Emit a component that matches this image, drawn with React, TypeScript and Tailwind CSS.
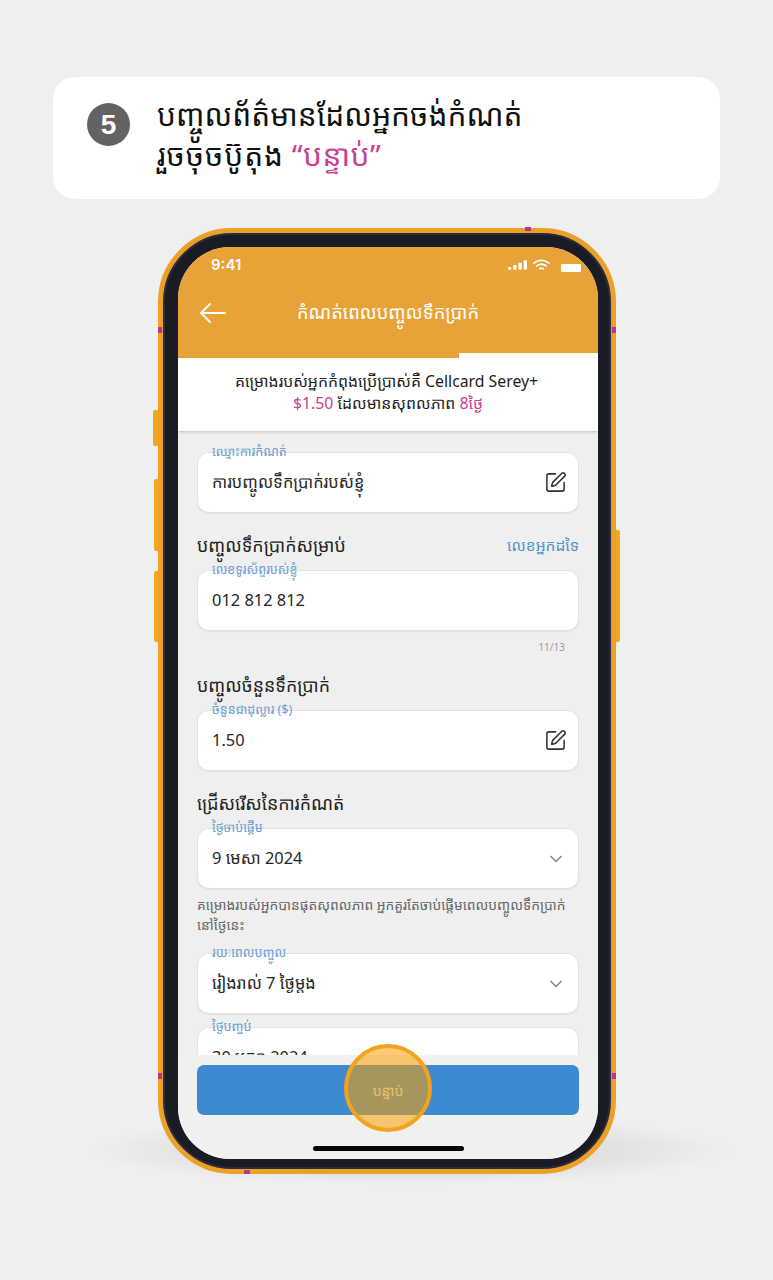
import { ChevronDown, SquarePen } from 'lucide-react';

const khmer = "font-['Noto_Sans','Noto_Sans_Khmer','Khmer_OS','Liberation_Sans',sans-serif]";

function Field({ label, value, icon, className = '' }: { label: string; value: string; icon?: 'edit' | 'chevron'; className?: string }) {
    return (
        <div className={`relative flex h-[61px] shrink-0 items-center justify-between rounded-[12px] border border-[#e2e2e2] bg-white pl-[14px] pr-[11px] shadow-[0_1px_1px_rgba(0,0,0,0.05)] ${className}`}>
            <span className="absolute left-[8px] top-[-10px] bg-[linear-gradient(to_bottom,transparent_56%,white_56%)] px-[6px] text-[12.6px] leading-[18px] text-[#6aa0d4]">{label}</span>
            <span className="mb-[2px] text-[16.4px] leading-[24px] text-[#262626]">{value}</span>
            {icon === 'edit' && <SquarePen size={23} strokeWidth={1.6} className="text-[#333]" />}
            {icon === 'chevron' && <ChevronDown size={20} strokeWidth={2} className="mr-[1px] text-[#8a8a8a]" />}
        </div>
    );
}

function Heading({ children }: { children: string }) {
    return <h2 className="text-[17.8px] font-normal leading-[26px] text-[#222]">{children}</h2>;
}

function StatusIcons() {
    return (
        <div className="flex items-center gap-[6px]">
            <svg width="19" height="10" viewBox="0 0 20 10" fill="white">
                <rect x="0" y="7" width="3.5" height="3" rx="1" />
                <rect x="5.5" y="5" width="3.5" height="5" rx="1" />
                <rect x="11" y="2.5" width="3.5" height="7.5" rx="1" />
                <rect x="16.5" y="0" width="3.5" height="10" rx="1" />
            </svg>
            <svg width="17" height="12" viewBox="0 0 18 12" fill="none" stroke="white" strokeWidth="1.7" strokeLinecap="round">
                <path d="M1 4 Q9 -2 17 4" />
                <path d="M4 7 Q9 3 14 7" />
                <path d="M7 10 Q9 8.6 11 10" />
            </svg>
            <div className="ml-[5px] mt-[6px] h-[8px] w-[20px] rounded-[1px] bg-white" />
        </div>
    );
}

const ticks = [
    'left-[525px] top-[227px] h-[4px] w-[6px]',
    'left-[158px] top-[327px] h-[6px] w-[4px]',
    'left-[612px] top-[327px] h-[6px] w-[4px]',
    'left-[158px] top-[1073px] h-[6px] w-[4px]',
    'left-[612px] top-[1073px] h-[6px] w-[4px]',
    'left-[244px] top-[1170px] h-[4px] w-[6px]',
];

const sideButtons = [
    'left-[153px] top-[410px] h-[36px] w-[5px] rounded-l-[2px]',
    'left-[154px] top-[479px] h-[72px] w-[4px] rounded-l-[2px]',
    'left-[154px] top-[571px] h-[71px] w-[4px] rounded-l-[2px]',
    'left-[616px] top-[530px] h-[112px] w-[4px] rounded-r-[2px]',
];

export default function App() {
    return (
        <div className={`relative flex h-[1280px] w-[773px] flex-col overflow-hidden bg-[#efefef] ${khmer}`}>
            {/* Floor shadow */}
            <div className="absolute left-[90px] top-[1115px] h-[70px] w-[640px] rounded-[50%] bg-[radial-gradient(ellipse_closest-side,#d2d2d2_0%,#dedede_55%,#efefef00_100%)]" />

            {/* Step card */}
            <div className="relative mx-[53px] mt-[77px] flex h-[122px] items-start rounded-[22px] bg-white pl-[34px] pt-[18px]">
                <div className="mt-[8px] flex h-[43px] w-[43px] shrink-0 items-center justify-center rounded-full bg-[#636363] font-['Liberation_Sans',sans-serif] text-[28px] font-bold text-white">5</div>
                <p className="ml-[27px] text-[29.9px] leading-[40px] text-[#111]">
                    បញ្ចូលព័ត៌មានដែលអ្នកចង់កំណត់
                    <br />
                    <span className="tracking-[0.9px]">រួចចុចប៊ូតុង</span> <span className="tracking-[0.45px] text-[#c9408f]">“បន្ទាប់”</span>
                </p>
            </div>

            {/* Phone side buttons */}
            {sideButtons.map((c) => (
                <div key={c} className={`absolute bg-[#f2a81e] ${c}`} />
            ))}

            {/* Phone */}
            <div className="relative ml-[158px] mt-[29px] h-[946px] w-[458px] rounded-[74px] border-[5px] border-[#e9a227] bg-[#1a1c25] pb-[10px] pl-[15px] pr-[13px] pt-[14px] shadow-[inset_0_0_0_2px_#2c2a3e]">
                <div className="relative flex h-full flex-col overflow-hidden rounded-[52px] bg-[#efefef]">
                    {/* Header */}
                    <div className="relative h-[111px] shrink-0 bg-[#e8a338] text-white">
                        <div className="flex items-center justify-between pl-[33px] pr-[17px] pt-[8px]">
                            <span className="font-['Inter',sans-serif] text-[15px] font-semibold leading-[20px]">9:41</span>
                            <StatusIcons />
                        </div>
                        <div className="relative mt-[25px] flex h-[30px] items-center justify-center">
                            <svg className="absolute left-[21px] top-[2px]" width="28" height="22" viewBox="0 0 28 22" fill="none" stroke="white" strokeWidth="1.8" strokeLinecap="round" strokeLinejoin="round">
                                <path d="M26 11 H2" />
                                <path d="M11 2 L2 11 L11 20" />
                            </svg>
                            <h1 className="mb-[6px] text-[18.3px] font-normal leading-[26px]">កំណត់ពេលបញ្ចូលទឹកប្រាក់</h1>
                        </div>
                        <div className="absolute bottom-0 right-0 h-[5px] w-[139px] bg-white" />
                    </div>

                    {/* Plan info */}
                    <div className="relative z-10 flex h-[73px] shrink-0 flex-col items-center justify-center bg-white pb-[6px] text-[15.8px] leading-[22px] text-[#1d1d1d] shadow-[0_1px_3px_rgba(0,0,0,0.2)]">
                        <p className="mr-[3px]">គម្រោងរបស់អ្នកកំពុងប្រើប្រាស់គឺ Cellcard Serey+</p>
                        <p>
                            <span className="text-[#c9408f]">$1.50</span> ដែលមានសុពលភាព <span className="text-[#c9408f]">8ថ្ងៃ</span>
                        </p>
                    </div>

                    {/* Form */}
                    <div className="flex min-h-0 flex-1 flex-col overflow-hidden px-[19px] pt-[21px]">
                        <Field label="ឈ្មោះការកំណត់" value="ការបញ្ចូលទឹកប្រាក់របស់ខ្ញុំ" icon="edit" />

                        <div className="mt-[19px] flex h-[26px] shrink-0 items-center justify-between">
                            <Heading>បញ្ចូលទឹកប្រាក់សម្រាប់</Heading>
                            <span className="text-[15.5px] leading-[24px] text-[#4f94d0]">លេខអ្នកដទៃ</span>
                        </div>
                        <Field className="mt-[12px]" label="លេខទូរស័ព្ទរបស់ខ្ញុំ" value="012 812 812" />
                        <div className="mt-[9px] h-[14px] shrink-0 pr-[14px] text-right text-[10px] leading-[14px] text-[#9a9a9a]">11/13</div>

                        <div className="mt-[18px] h-[26px] shrink-0">
                            <Heading>បញ្ចូលចំនួនទឹកប្រាក់</Heading>
                        </div>
                        <Field className="mt-[12px]" label="ចំនួនជាដុល្លារ ($)" value="1.50" icon="edit" />

                        <div className="mt-[19px] h-[26px] shrink-0">
                            <Heading>ជ្រើសរើសនៃការកំណត់</Heading>
                        </div>
                        <Field className="mt-[12px]" label="ថ្ងៃចាប់ផ្តើម" value="9 មេសា 2024" icon="chevron" />
                        <p className="mt-[6px] h-[52px] shrink-0 text-[13.8px] leading-[20px] text-[#666]">
                            គម្រោងរបស់អ្នកបានផុតសុពលភាព អ្នកគួរតែចាប់ផ្តើមពេលបញ្ចូលទឹកប្រាក់
                            <br />
                            នៅថ្ងៃនេះ
                        </p>
                        <Field className="mt-[6px]" label="រយៈពេលបញ្ចូល" value="រៀងរាល់ 7 ថ្ងៃម្តង" icon="chevron" />
                        <Field className="mt-[13px]" label="ថ្ងៃបញ្ចប់" value="30 មករា 2024" />
                    </div>

                    {/* Footer */}
                    <div className="relative z-10 flex h-[104px] shrink-0 flex-col items-center bg-[#f0f0f0] pt-[10px]">
                        <button className="flex h-[50px] w-[382px] items-center justify-center rounded-[7px] bg-[#3d8ad0] text-[14px] text-white/80">បន្ទាប់</button>
                        <div className="mt-[31px] h-[5px] w-[151px] rounded-full bg-black" />
                    </div>
                </div>
            </div>

            {/* Tap indicator */}
            <div className="absolute left-[344px] top-[1044px] z-20 h-[88px] w-[88px] rounded-full border-[4px] border-[#f0a31f] bg-[#fca000]/55" />

            {/* Edge marks */}
            {ticks.map((c) => (
                <div key={c} className={`absolute z-20 bg-[#b8358f] ${c}`} />
            ))}
        </div>
    );
}
